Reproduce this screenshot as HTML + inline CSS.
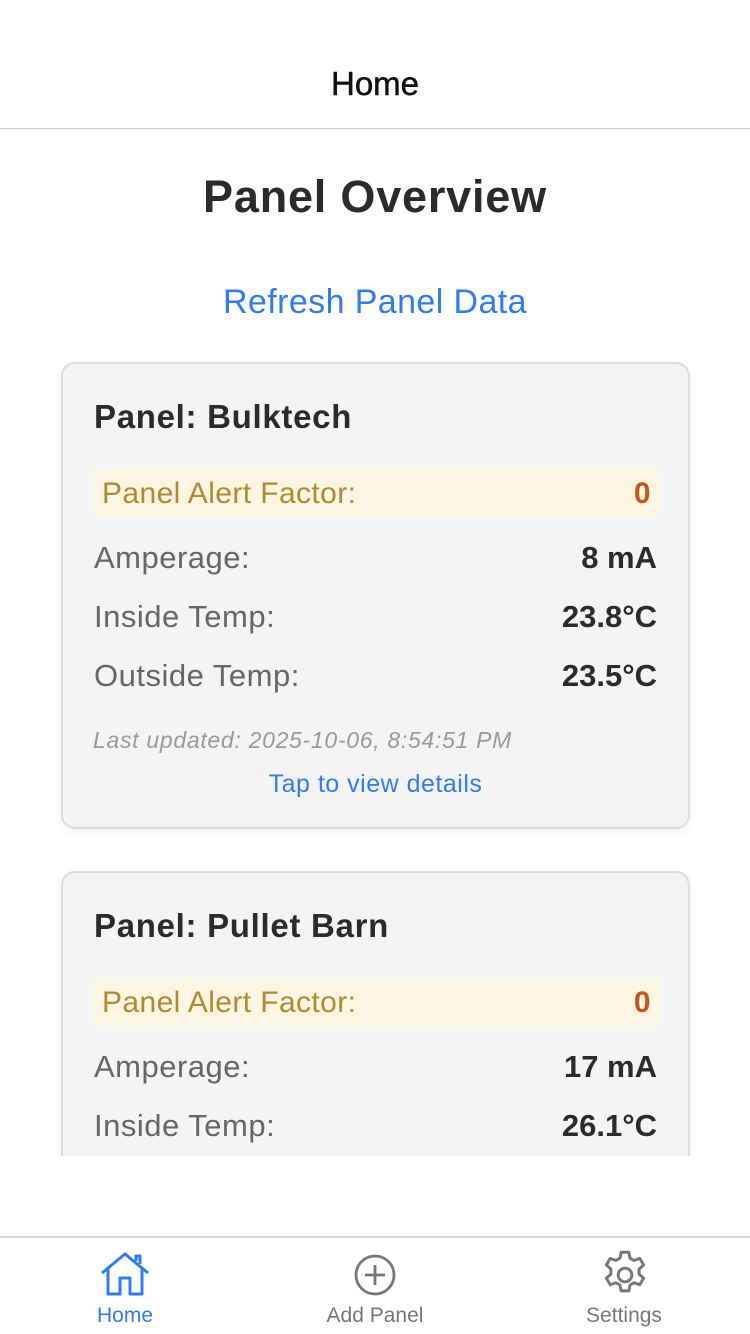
<!DOCTYPE html>
<html><head><meta charset="utf-8"><style>
*{margin:0;padding:0;box-sizing:border-box}
body{width:750px;height:1334px;background:#fff;font-family:"Liberation Sans",sans-serif;position:relative;overflow:hidden}
.abs{position:absolute}
.hdr{top:0;left:0;width:750px;height:129px;border-bottom:1px solid #c8c8c8}
.hdr div{position:absolute;top:65px;width:750px;text-align:center;font-size:33px;color:#111;-webkit-text-stroke:0.5px #111}
.scroll{top:130px;left:0;width:750px;height:1026px;overflow:hidden}
.card{position:absolute;left:61px;width:629px;background:#f4f4f4;border:2px solid #dcdcdc;border-radius:14px;box-shadow:0 3px 10px rgba(0,0,0,0.06)}
.t{position:absolute;left:31px;font-size:33px;font-weight:bold;color:#2b2b2b;letter-spacing:0.7px}
.al{position:absolute;left:30px;width:567px;height:48px;background:#fcf5e2;border-radius:8px}
.al span{position:absolute;top:8px;font-size:30px;letter-spacing:0.4px}
.row{position:absolute;left:31px;width:563px;font-size:31px;color:#666;letter-spacing:0.5px}
.row b{position:absolute;right:0;top:0;color:#2b2b2b;letter-spacing:0}
.tab{position:absolute;top:1236px;left:0;width:750px;height:98px;border-top:2px solid #d8d8d8}
.ti{position:absolute;top:1304px;font-size:21px;width:200px;text-align:center}
</style></head><body>
<div class="abs hdr"><div>Home</div></div>
<div class="abs scroll">
<div class="abs" style="top:41px;width:750px;text-align:center;font-size:45px;font-weight:bold;color:#2b2b2b;letter-spacing:0.8px">Panel Overview</div>
<div class="abs" style="top:153px;width:750px;text-align:center;font-size:34px;color:#2f7cf6;letter-spacing:0.4px">Refresh Panel Data</div>
<div class="card" style="top:232px;height:467px">
<div class="t" style="top:34px">Panel: Bulktech</div>
<div class="al" style="top:105px"><span style="left:9px;color:#b08a2e">Panel Alert Factor:</span><span style="right:9px;color:#c8541e;font-weight:bold">0</span></div>
<div class="row" style="top:176px">Amperage:<b>8 mA</b></div>
<div class="row" style="top:235px">Inside Temp:<b>23.8°C</b></div>
<div class="row" style="top:294px">Outside Temp:<b>23.5°C</b></div>
<div class="abs" style="left:30px;top:363px;font-size:23px;font-style:italic;color:#999;letter-spacing:0.7px">Last updated: 2025-10-06, 8:54:51 PM</div>
<div class="abs" style="left:0;top:406px;width:625px;text-align:center;font-size:25px;color:#2f7cf6;letter-spacing:0.5px">Tap to view details</div>
</div>
<div class="card" style="top:741px;height:467px">
<div class="t" style="top:34px">Panel: Pullet Barn</div>
<div class="al" style="top:105px"><span style="left:9px;color:#b08a2e">Panel Alert Factor:</span><span style="right:9px;color:#c8541e;font-weight:bold">0</span></div>
<div class="row" style="top:176px">Amperage:<b>17 mA</b></div>
<div class="row" style="top:235px">Inside Temp:<b>26.1°C</b></div>
</div>
</div>
<div class="tab"></div>
<svg class="abs" style="left:100px;top:1252px" width="50" height="46" viewBox="0 0 50 46" fill="none" stroke="#2f7cf6" stroke-width="3" stroke-linejoin="round">
<path d="M2 21 L25 2 L48 21 M8 16 V42 H20 V26 H30 V42 H42 V16 M36 9 V4 H40 V12"/></svg>
<svg class="abs" style="left:354px;top:1254px" width="42" height="42" viewBox="0 0 42 42" fill="none" stroke="#777" stroke-width="2.8">
<circle cx="21" cy="21" r="19"/><path d="M21 11 V31 M11 21 H31"/></svg>
<svg class="abs" style="left:600px;top:1250px" width="50" height="50" viewBox="1 1 22 22" fill="none" stroke="#777" stroke-width="1.3" stroke-linejoin="round">
<circle cx="12" cy="12" r="3"/><path d="M10.3 2h3.4l.5 2.6 1.8 1 2.5-.9 1.7 2.9-2 1.8v2.2l2 1.8-1.7 2.9-2.5-.9-1.8 1-.5 2.6h-3.4l-.5-2.6-1.8-1-2.5.9-1.7-2.9 2-1.8V9.4l-2-1.8 1.7-2.9 2.5.9 1.8-1z"/></svg>
<div class="ti" style="left:25px;color:#2f7cf6">Home</div>
<div class="ti" style="left:275px;color:#777">Add Panel</div>
<div class="ti" style="left:524px;color:#777">Settings</div>
</body></html>
